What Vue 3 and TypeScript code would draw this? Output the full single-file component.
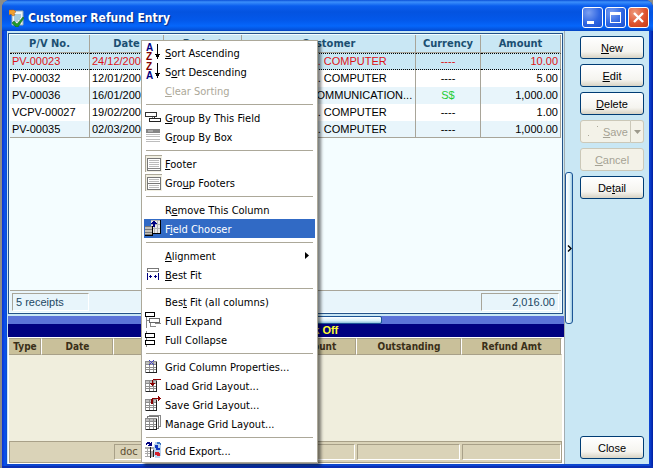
<script setup lang="ts">
interface Receipt {
  no: string
  date: string
  project: string
  customer: string
  currency: string
  amount: string
}

interface Shape {
  d: string
  fill?: string
  stroke?: string
}

interface Glyph {
  x: number
  y: number
  ch: string
  fill: string
}

interface Icon {
  shapes: Shape[]
  glyphs?: Glyph[]
}

interface MenuItem {
  label: string
  icon?: string
  disabled?: boolean
  active?: boolean
  submenu?: boolean
}

const receipts: Receipt[] = [
  { no: 'PV-00023', date: '24/12/2007', project: '----', customer: 'A.B. COMPUTER', currency: '----', amount: '10.00' },
  { no: 'PV-00032', date: '12/01/2008', project: '----', customer: 'A.B. COMPUTER', currency: '----', amount: '5.00' },
  { no: 'PV-00036', date: '16/01/2008', project: '----', customer: 'J COMMUNICATION...', currency: 'S$', amount: '1,000.00' },
  { no: 'VCPV-00027', date: '19/02/2008', project: '----', customer: 'A.B. COMPUTER', currency: '----', amount: '1.00' },
  { no: 'PV-00035', date: '02/03/2008', project: '----', customer: 'A.B. COMPUTER', currency: '----', amount: '1,000.00' },
]

const actions = [
  { label: '&New' },
  { label: '&Edit' },
  { label: '&Delete' },
  { label: '&Save', disabled: true, split: true },
  { label: '&Cancel', disabled: true },
  { label: 'De&tail' },
]

const groups: MenuItem[][] = [
  [
    { label: '&Sort Ascending', icon: 'sortAsc' },
    { label: 'S&ort Descending', icon: 'sortDesc' },
    { label: '&Clear Sorting', disabled: true },
  ],
  [
    { label: '&Group By This Field', icon: 'groupField' },
    { label: 'G&roup By Box', icon: 'groupBox' },
  ],
  [
    { label: '&Footer', icon: 'footer' },
    { label: 'Gro&up Footers', icon: 'groupFooters' },
  ],
  [
    { label: 'R&emove This Column' },
    { label: 'F&ield Chooser', icon: 'chooser', active: true },
  ],
  [
    { label: '&Alignment', submenu: true },
    { label: '&Best Fit', icon: 'bestFit' },
  ],
  [
    { label: 'Bes&t Fit (all columns)' },
    { label: 'Full Expand', icon: 'expand' },
    { label: 'Full Collapse', icon: 'collapse' },
  ],
  [
    { label: 'Grid Column Properties...', icon: 'gridProps' },
    { label: 'Load Grid Layout...', icon: 'gridLoad' },
    { label: 'Save Grid Layout...', icon: 'gridSave' },
    { label: 'Manage Grid Layout...', icon: 'gridManage' },
  ],
  [{ label: 'Grid Export...', icon: 'gridExport' }],
]

const arrowDown: Shape = { d: 'M13 1h1v10h2v1h-1v2h-1v2h-1v-2h-1v-2h-1v-1h2z', fill: '#000' }

const table: Shape[] = [
  { d: 'M1 4h12v12h-12z', fill: '#8e8e8e' },
  { d: 'M2 8h3v2h-3zM6 8h3v2h-3zM10 8h2v2h-2zM2 11h3v1h-3zM6 11h3v1h-3zM10 11h2v1h-2zM2 13h3v2h-3zM6 13h3v2h-3zM10 13h2v2h-2z', fill: '#fff' },
  { d: 'M2 5h3v2h-3zM6 5h3v2h-3zM10 5h2v2h-2z', fill: '#c0c0c0' },
  { d: 'M12 5h1v11h-11v-1h10z', fill: '#222' },
]

const pressed: Shape[] = [
  { d: 'M1 1h17v17h-17z', fill: '#f1efe2' },
  { d: 'M1 1h17v1h-16v16h-1z', fill: '#aca899' },
  { d: 'M3 4h14v13h-14z', fill: '#777' },
  { d: 'M4 5h12v11h-12z', fill: '#fff' },
]

const icons: Record<string, Icon> = {
  sortAsc: {
    shapes: [arrowDown],
    glyphs: [
      { x: 2, y: 8, ch: 'A', fill: '#000080' },
      { x: 2, y: 17, ch: 'Z', fill: '#800000' },
    ],
  },
  sortDesc: {
    shapes: [arrowDown],
    glyphs: [
      { x: 2, y: 8, ch: 'Z', fill: '#800000' },
      { x: 2, y: 17, ch: 'A', fill: '#000080' },
    ],
  },
  groupField: {
    shapes: [
      { d: 'M1.5 4.5h11v4h-11z', fill: '#fff', stroke: '#333' },
      { d: 'M10.5 8.5v2', stroke: '#333' },
      { d: 'M5.5 10.5h11v3h-11z', fill: '#fff', stroke: '#222' },
      { d: 'M8.5 9v1', stroke: '#888' },
    ],
  },
  groupBox: {
    shapes: [
      { d: 'M2 2h14v4h-14z', fill: '#858585' },
      { d: 'M4 3h5v2h-5z', fill: '#aaa' },
      { d: 'M2 7h14v1h-14zM2 9h14v1h-14zM2 12h14v1h-14zM2 14h14v1h-14z', fill: '#bdbdbd' },
    ],
  },
  footer: {
    shapes: [...pressed, { d: 'M5 6h10v1h-10zM5 8h10v1h-10zM5 10h10v1h-10zM5 12h10v1h-10z', fill: '#bbb' }, { d: 'M4 14h12v1h-12z', fill: '#888' }],
  },
  groupFooters: {
    shapes: [...pressed, { d: 'M5 6h10v1h-10zM5 8h10v1h-10zM5 12h10v1h-10zM5 14h10v1h-10z', fill: '#bbb' }, { d: 'M4 10h12v1h-12z', fill: '#777' }],
  },
  chooser: {
    shapes: [
      { d: 'M7 1h10v14h-10z', fill: '#000' },
      { d: 'M7 1h9v13h-9z', fill: '#e8e8e8' },
      { d: 'M7 1h9v1h-9zM10 1h1v13h-1zM13 1h1v13h-1zM7 5h9v1h-9zM7 9h9v1h-9z', fill: '#b4b4b4' },
      { d: 'M1 7h8v10h-8z', fill: '#000' },
      { d: 'M1 7h7v9h-7z', fill: '#c4c0b8' },
      { d: 'M1 7h7v1h-7zM1 10h7v1h-7zM1 13h7v1h-7zM1 15h7v1h-7z', fill: '#777' },
      { d: 'M10 2h1v1h1v1h1v1h-2v3h-2v-3h-2v-1h1v-1h1v-1z', fill: '#000080' },
    ],
  },
  bestFit: {
    shapes: [
      { d: 'M3.5 3.5h11v3h-11z', fill: '#fff', stroke: '#777' },
      { d: 'M3 8h1v7h-1zM14 8h1v7h-1zM5 11h3v1h-3zM10 11h3v1h-3zM6 10h1v3h-1zM11 10h1v3h-1z', fill: '#000080' },
    ],
  },
  expand: {
    shapes: [
      { d: 'M2.5 5v12', stroke: '#888' },
      { d: 'M2.5 9.5h4M6.5 11.5v4h5M11 12.5h6', stroke: '#888' },
      { d: 'M1.5 1.5h9v4h-9z', fill: '#fff', stroke: '#000' },
      { d: 'M5.5 7.5h10v4h-10z', fill: '#fff', stroke: '#666' },
    ],
  },
  collapse: {
    shapes: [
      { d: 'M2.5 1v16', stroke: '#888' },
      { d: 'M1.5 3.5h9v4h-9z', fill: '#fff', stroke: '#000' },
      { d: 'M1.5 10.5h9v4h-9z', fill: '#fff', stroke: '#000' },
    ],
  },
  gridProps: {
    shapes: [...table, { d: 'M5 3h1v1h1v1h1v-1h1v-1h1v1h-1v1h-1v1h1v1h1v1h-1v-1h-1v-1h-1v1h-1v1h-1v-1h1v-1h1v-1h-1v-1h-1z', fill: '#3c3cc8' }],
  },
  gridLoad: {
    shapes: [...table, { d: 'M8 3h9v1h-8v3h2v1h-1v1h-1v1h-1v-1h-1v-1h-1v-1h2v-3h1z', fill: '#8b0000' }],
  },
  gridSave: {
    shapes: [...table, { d: 'M7 9v-5h1v-1h6v-2h1v1h1v1h1v1h-1v1h-1v1h-1v-2h-5v5z', fill: '#8b0000' }],
  },
  gridManage: {
    shapes: [
      { d: 'M5.5 1.5h11v11h-11z', fill: '#fff', stroke: '#888' },
      { d: 'M3.5 2.5h11v12h-11z', fill: '#fff', stroke: '#777' },
      ...table,
    ],
  },
  gridExport: {
    shapes: [
      { d: 'M1 6h9v10h-9z', fill: '#aaa' },
      { d: 'M1 8h2v2h-2zM4 8h2v2h-2zM7 8h2v2h-2zM1 11h2v1h-2zM4 11h2v1h-2zM1 13h2v2h-2zM4 13h2v2h-2z', fill: '#fff' },
      { d: 'M6 6h1v11h-1zM9 9h1v7h-1z', fill: '#222' },
      { d: 'M2 4v-2h1v-1h3v1h1v-1h1v4h-4v-1h1v-1h-2v1z', fill: '#000080' },
      { d: 'M11 1h5v2h1v12h-1v2h-5v-2h-1v-12h1z', fill: '#b9d4ee' },
      { d: 'M11 4h3v3h2v2h-4v-2h-1z', fill: '#1238c0' },
      { d: 'M11 11h4v1h1v3h-3v-1h-2z', fill: '#d6202a' },
      { d: 'M13 1h3v1h1v2h-1v-1h-3z', fill: '#3e76c4' },
    ],
  },
}

/** Splits a caption such as "De&tail" around its accelerator letter. */
function caption(label: string): [string, string, string] {
  const at = label.indexOf('&')
  return at < 0 ? [label, '', ''] : [label.slice(0, at), label[at + 1], label.slice(at + 2)]
}
</script>

<template>
  <div class="window">
    <header class="titlebar">
      <svg class="app-icon" width="16" height="18" viewBox="0 0 16 18" aria-hidden="true">
        <path d="M3 2h11v14h-11z" fill="#eef4f6" stroke="#8fa9b5" />
        <path d="M5 6h7M5 8h7M5 10h6M5 12h4" stroke="#5ba4c8" />
        <path d="M0 1h5l2 2-2 1 1 2-2 1-2-2-2 1z" fill="#f0a030" stroke="#a85a10" stroke-width=".5" />
        <path d="M5 12l3 3 6-7 1 1-6 9h-2l-4-4z" fill="#1f9a2c" stroke="#0c5c18" stroke-width=".5" />
      </svg>
      <h1>Customer Refund Entry</h1>
      <button class="caption-btn" type="button" aria-label="Minimize">
        <svg width="19" height="19" viewBox="0 0 19 19"><path d="M4 13h7v3h-7z" fill="#fff" /></svg>
      </button>
      <button class="caption-btn" type="button" aria-label="Maximize">
        <svg width="19" height="19" viewBox="0 0 19 19"><path d="M4 4h11v11h-11zM5 7v7h9v-7z" fill="#fff" fill-rule="evenodd" /></svg>
      </button>
      <button class="caption-btn close" type="button" aria-label="Close window">
        <svg width="19" height="19" viewBox="0 0 19 19"><path d="M5 5l9 9M14 5l-9 9" stroke="#fff" stroke-width="2.4" /></svg>
      </button>
    </header>

    <div class="body">
      <main class="panes">
        <section class="receipts">
          <table>
            <colgroup>
              <col class="c-no" /><col class="c-date" /><col class="c-proj" /><col /><col class="c-cur" /><col class="c-amt" />
            </colgroup>
            <thead>
              <tr><th>P/V No.</th><th>Date</th><th>Project</th><th>Customer</th><th>Currency</th><th>Amount</th></tr>
            </thead>
            <tbody>
              <tr v-for="(r, i) in receipts" :key="r.no" :class="{ selected: i === 0 }">
                <td>{{ r.no }}</td>
                <td>{{ r.date }}</td>
                <td class="mid">{{ r.project }}</td>
                <td class="customer">{{ r.customer }}</td>
                <td class="mid" :class="{ foreign: r.currency === 'S$' }">{{ r.currency }}</td>
                <td class="num">{{ r.amount }}</td>
              </tr>
            </tbody>
          </table>
          <footer class="totals">
            <span class="count">5 receipts</span>
            <span class="sum">2,016.00</span>
          </footer>
        </section>

        <div class="hsplit"><span class="hhandle"></span></div>
        <div class="mode">Knock Off</div>

        <section class="documents">
          <table>
            <colgroup>
              <col class="d-type" /><col class="d-date" /><col /><col class="d-amt" /><col class="d-out" /><col class="d-ref" />
            </colgroup>
            <thead>
              <tr><th>Type</th><th>Date</th><th>Doc No.</th><th>Amount</th><th>Outstanding</th><th>Refund Amt</th></tr>
            </thead>
          </table>
          <footer class="doc-totals">
            <span class="f-doc">doc</span><span class="f-amt"></span><span class="f-out"></span><span class="f-ref"></span>
          </footer>
        </section>
      </main>

      <div class="vsplit">
        <button class="vhandle" type="button" aria-label="Collapse panel">
          <svg width="5" height="7" viewBox="0 0 5 7"><path d="M1 .5l3 3-3 3" fill="none" stroke="#000" stroke-width="1.4" /></svg>
        </button>
      </div>

      <aside class="actions">
        <template v-for="a in actions" :key="a.label">
          <div v-if="a.split" class="split">
            <button class="btn" type="button" disabled>
              <svg class="ghost" width="12" height="14" viewBox="0 0 12 14"><path d="M1 10h1v1h-1zM10 1h1v1h-1z" fill="#aca899" /></svg>
              <span>{{ caption(a.label)[0] }}<u>{{ caption(a.label)[1] }}</u>{{ caption(a.label)[2] }}</span>
            </button>
            <button class="btn drop" type="button" disabled aria-label="Save options">
              <svg width="7" height="4" viewBox="0 0 7 4"><path d="M0 0h7l-3.500 4z" fill="#9d9a8c" /></svg>
            </button>
          </div>
          <button v-else class="btn" type="button" :disabled="a.disabled">
            <span>{{ caption(a.label)[0] }}<u>{{ caption(a.label)[1] }}</u>{{ caption(a.label)[2] }}</span>
          </button>
        </template>
        <button class="btn last" type="button">Close</button>
      </aside>
    </div>

    <div class="menu" role="menu">
      <div v-for="(g, gi) in groups" :key="gi" class="group" role="group">
        <button
          v-for="m in g"
          :key="m.label"
          class="item"
          :class="{ active: m.active }"
          type="button"
          role="menuitem"
          :disabled="m.disabled"
        >
          <span class="slot">
            <svg v-if="m.icon" width="18" height="19" viewBox="0 0 18 19" shape-rendering="crispEdges" aria-hidden="true">
              <path v-for="(s, si) in icons[m.icon].shapes" :key="si" :d="s.d" :fill="s.fill ?? 'none'" :stroke="s.stroke ?? 'none'" />
              <text v-for="t in icons[m.icon].glyphs ?? []" :key="t.ch" :x="t.x" :y="t.y" :fill="t.fill" class="letter">{{ t.ch }}</text>
            </svg>
          </span>
          <span class="text">{{ caption(m.label)[0] }}<u>{{ caption(m.label)[1] }}</u>{{ caption(m.label)[2] }}</span>
          <svg v-if="m.submenu" class="more" width="4" height="7" viewBox="0 0 4 7"><path d="M0 0l4 3.500-4 3.500z" fill="#000" /></svg>
        </button>
      </div>
    </div>
  </div>
</template>

<style>
html,
body,
#app {
  height: 100%;
  margin: 0;
}
body {
  background: #8c8c88;
}
</style>

<style scoped>
* {
  box-sizing: border-box;
}
.window {
  position: relative;
  display: flex;
  flex-direction: column;
  min-height: 100%;
  margin-left: 2px;
  padding: 0 4px 4px 5px;
  background: linear-gradient(90deg, #0831d9, #0855e8 3px, #0d47d0 5px, #0d47d0 calc(100% - 4px), #0a3fd0 calc(100% - 3px), #001ea0);
  border-radius: 8px 8px 0 0;
  overflow: hidden;
  font-family: 'Liberation Sans', Arial, sans-serif;
  font-size: 11px;
  box-shadow: inset 0 -2px 0 #0a2fb4;
}
button {
  font: inherit;
  padding: 0;
  margin: 0;
}
.titlebar {
  display: flex;
  align-items: center;
  gap: 2px;
  height: 31px;
  margin: 0 -4px 0 -5px;
  padding: 4px 4px 0 7px;
  background: linear-gradient(#0a50d8 0, #3b8ffb 2px, #0a5eee 6px, #0453e0 12px, #0358ea 20px, #0566fb 26px, #0450d8 30px, #0340b8 31px);
}
h1 {
  flex: 1;
  margin: 0;
  padding-left: 1px;
  color: #fff;
  font: bold 12px 'DejaVu Sans Condensed', 'DejaVu Sans', sans-serif;
  text-shadow: 1px 1px 1px #0a2a80;
}
.caption-btn {
  display: grid;
  place-items: center;
  width: 21px;
  height: 21px;
  border: 1px solid #fff;
  border-radius: 3px;
  background: radial-gradient(circle at 30% 25%, #7ba0f2, #2f66e2 55%, #1b50d2);
}
.caption-btn.close {
  background: radial-gradient(circle at 30% 25%, #ee9a7c, #df5430 55%, #c63a14);
}
.body {
  flex: 1;
  display: flex;
  background: #c9e7f4;
}
.panes {
  flex: 1;
  min-width: 0;
  display: flex;
  flex-direction: column;
  padding: 2px 0 0 1px;
  border-right: 1px solid #a3adb0;
}
.receipts {
  flex: 1;
  display: flex;
  flex-direction: column;
  margin-right: 1px;
  padding: 1px;
  border: 1px solid #24538a;
  background: #f4fdff;
}
table {
  width: 100%;
  table-layout: fixed;
  border-collapse: separate;
  border-spacing: 0;
}
.c-no { width: 80px; }
.c-date { width: 74px; }
.c-proj { width: 78px; }
.c-cur { width: 65px; }
.c-amt { width: 80px; }
th {
  padding: 0;
  font: bold 11px 'DejaVu Sans Condensed', 'DejaVu Sans', sans-serif;
  white-space: nowrap;
  overflow: hidden;
}
.receipts th {
  height: 18px;
  background: #c9e7f4;
  color: #1b4f72;
  border-right: 1px solid #a8a599;
  border-bottom: 1px solid #a8a599;
}
td {
  height: 17px;
  padding: 0 2px;
  line-height: 15px;
  white-space: nowrap;
  overflow: hidden;
  background: #fff;
  border-right: 1px solid #a8a599;
}
tbody tr:nth-child(odd) td {
  background: #e8f5fb;
}
tbody tr:last-child td {
  border-bottom: 1px solid #a8a599;
}
tbody tr.selected td {
  background: #c9e7f4;
  color: #dc1418;
  border-top: 1px dotted #000;
  border-bottom: 1px dotted #000;
}
.mid {
  text-align: center;
}
.customer {
  padding: 0 0 0 58px;
}
.foreign {
  color: #22cc33;
}
.num {
  text-align: right;
}
.totals {
  display: flex;
  justify-content: space-between;
  margin-top: auto;
  padding: 2px 2px 1px;
  border-top: 1px solid #a8a599;
  background: #e8f5fb;
  color: #1c4864;
}
.totals span {
  height: 18px;
  line-height: 17px;
  padding: 0 3px;
  border: 1px solid #fff;
  border-top-color: #a8a599;
  border-left-color: #a8a599;
}
.count {
  width: 77px;
}
.sum {
  width: 78px;
  text-align: right;
}
.hsplit {
  display: flex;
  justify-content: center;
  height: 8px;
  margin-top: 2px;
  background: #5b73d8;
}
.hhandle {
  width: 192px;
  height: 8px;
  border: 1px solid #1c5596;
  border-radius: 2px;
  background: linear-gradient(#fff, #d8f0fa 60%, #8fc0dc);
}
.mode {
  height: 13px;
  padding-left: 52px;
  background: #000080;
  color: #ffff30;
  font: bold 11px/13px 'Liberation Sans', Arial, sans-serif;
  text-align: center;
}
.documents {
  height: 127px;
  display: flex;
  flex-direction: column;
  border: 1px solid #fff;
  border-right: 2px solid #fff;
  background: #f0eedd;
}
.d-type { width: 33px; }
.d-date { width: 72px; }
.d-amt { width: 80px; }
.d-out { width: 105px; }
.d-ref { width: 100px; }
.documents th {
  height: 17px;
  background: #c9c09a;
  color: #3a2f18;
  border-top: 1px solid #a8a088;
  border-bottom: 1px solid #a8a088;
  border-right: 1px solid #fff;
  box-shadow: inset -1px 0 0 #a8a088;
  font-size: 10px;
}
.doc-totals {
  display: flex;
  justify-content: flex-end;
  gap: 2px;
  height: 22px;
  margin-top: auto;
  padding: 2px 0;
  border: 1px solid #a8a088;
  background: #dad3b8;
  font: 11px/14px 'DejaVu Sans Condensed', 'DejaVu Sans', sans-serif;
  color: #5c4c30;
}
.doc-totals span {
  border: 1px solid #fff;
  border-top-color: #a8a088;
  border-left-color: #a8a088;
}
.f-doc { width: 151px; padding-left: 5px; }
.f-amt { width: 88px; }
.f-out { width: 103px; }
.f-ref { width: 99px; }
.vsplit {
  display: flex;
  flex-direction: column;
  padding-top: 141px;
}
.vhandle {
  display: grid;
  place-items: center;
  width: 8px;
  height: 152px;
  border: 1px solid #1c5596;
  border-radius: 3px;
  background: linear-gradient(90deg, #fff, #e0f4fc 60%, #9cc8de);
}
.actions {
  display: flex;
  flex-direction: column;
  gap: 5px;
  padding: 5px 5px 5px 7px;
}
.btn {
  width: 64px;
  height: 23px;
  border: 1px solid #003c74;
  border-radius: 3px;
  background: linear-gradient(#fff, #f5f4ef 70%, #d8d3c4);
  color: #000;
}
.btn:disabled {
  border-color: #cbc8b8;
  background: #f3f2e8;
  color: #a5a294;
}
.split {
  display: flex;
}
.split .btn {
  width: 51px;
  border-radius: 3px 0 0 3px;
  display: flex;
  align-items: center;
  justify-content: space-between;
  padding: 0 2px 0 6px;
}
.split .drop {
  width: 13px;
  border-left: 0;
  border-radius: 0 3px 3px 0;
  justify-content: center;
  padding: 0;
}
.last {
  margin-top: auto;
}
.menu {
  position: absolute;
  left: 139px;
  top: 40px;
  width: 177px;
  padding: 2px;
  border: 1px solid #aca899;
  background: #fff;
  box-shadow: 3px 3px 3px rgba(0, 0, 0, 0.5);
  font: 11px/17px 'DejaVu Sans Condensed', 'DejaVu Sans', sans-serif;
}
.group + .group {
  padding-top: 8px;
  background: linear-gradient(#aca899, #aca899) 2px 4px / calc(100% - 4px) 1px no-repeat;
}
.item {
  display: flex;
  align-items: center;
  width: 100%;
  height: 19px;
  border: 0;
  background: transparent;
  color: #000;
  text-align: left;
}
.item:disabled {
  color: #aca899;
}
.item.active {
  background: #316ac5;
  color: #fff;
}
.slot {
  width: 21px;
  height: 19px;
  display: flex;
}
.text {
  padding-top: 2px;
}
.letter {
  font: bold 10px 'Liberation Sans', sans-serif;
}
.more {
  margin-left: auto;
  margin-right: 6px;
}
</style>
